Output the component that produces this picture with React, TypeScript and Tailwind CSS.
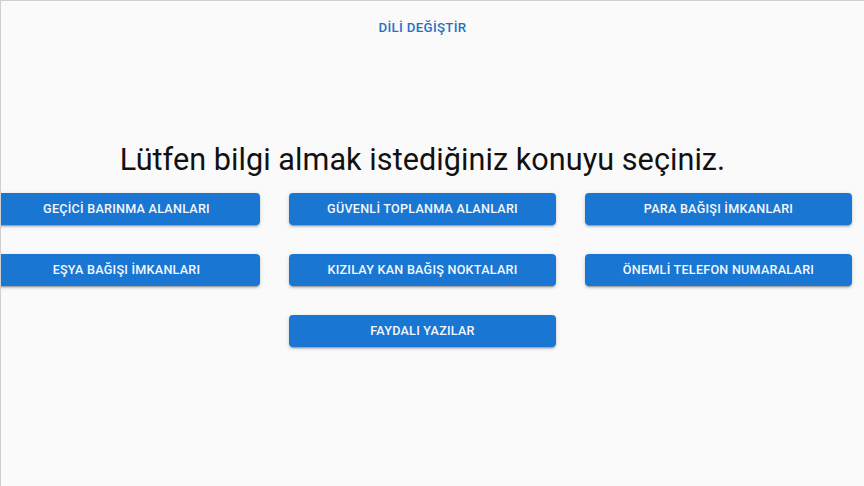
import React from "react";

const topics = [
  "Geçici Barınma Alanları",
  "Güvenli Toplanma Alanları",
  "Para Bağışı İmkanları",
  "Eşya Bağışı İmkanları",
  "Kızılay Kan Bağış Noktaları",
  "Önemli Telefon Numaraları",
  "Faydalı Yazılar",
];

const upper = (s: string) => s.toLocaleUpperCase("tr-TR");

export default function App() {
  return (
    <div className="w-[864px] h-[486px] overflow-hidden bg-[#fafafa] border-t border-l border-[#cfcfcf] font-['Roboto',sans-serif]">
      <div className="w-[859px] ml-[-8px] flex flex-col items-center">
        {/* Language switch */}
        <button className="mt-[12px] h-[30px] px-2 rounded text-[13.3px] font-medium tracking-[0.3px] text-[#1f72c4]">
          {upper("Dili Değiştir")}
        </button>

        {/* Heading */}
        <h1 className="mt-[98px] text-[30.6px] leading-[38px] text-[#111] tracking-[0.05px]">
          Lütfen bilgi almak istediğiniz konuyu seçiniz.
        </h1>

        {/* Topic buttons */}
        <div className="mt-[14px] w-full grid grid-cols-[267px_267px_267px] gap-x-[29px] gap-y-[29px]">
          {topics.map((t, i) => (
            <button
              key={t}
              className={
                "h-[32px] rounded bg-[#1976d2] text-[#f4f8fd] text-[12.6px] font-medium tracking-[0.25px] shadow-[0_3px_1px_-2px_rgba(0,0,0,0.2),0_2px_2px_0_rgba(0,0,0,0.14),0_1px_5px_0_rgba(0,0,0,0.12)] " +
                (i === 6 ? "col-start-2" : "")
              }
            >
              {upper(t)}
            </button>
          ))}
        </div>
      </div>
    </div>
  );
}
